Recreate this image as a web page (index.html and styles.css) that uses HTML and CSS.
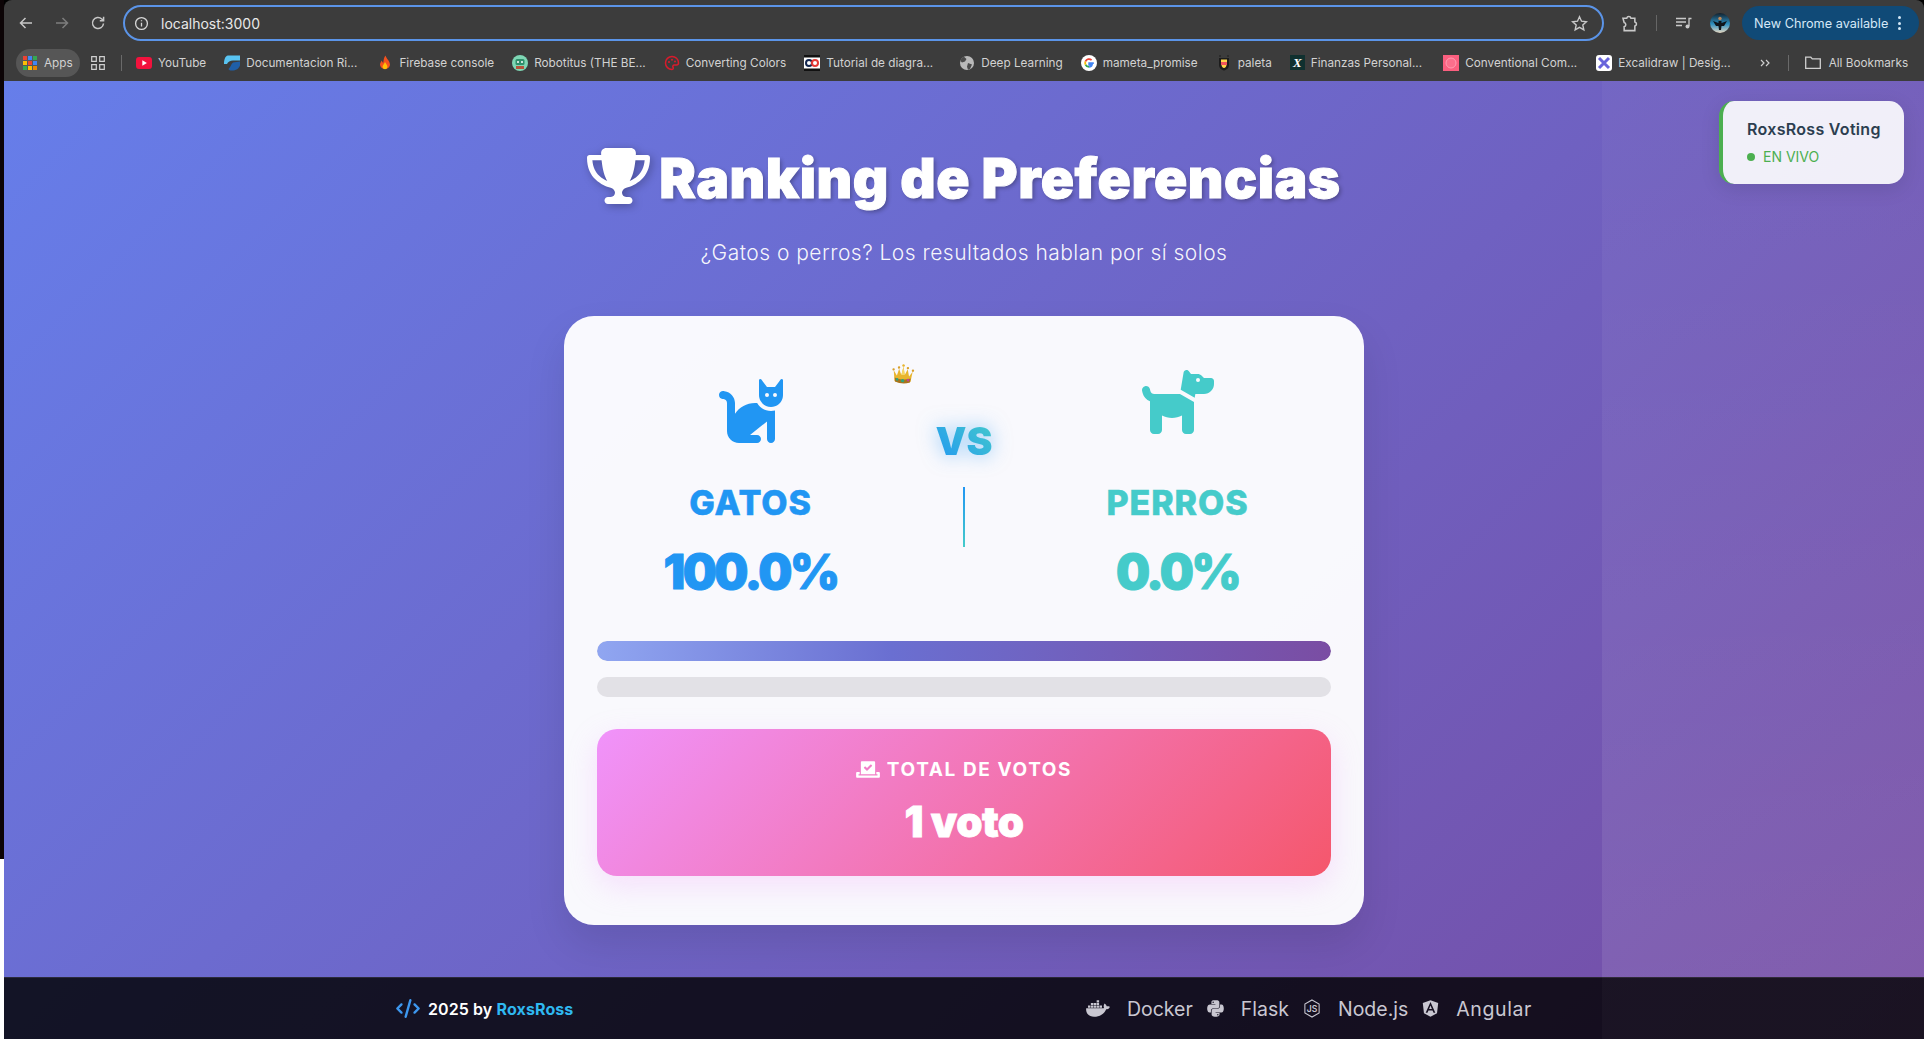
FILE: index.html
```html
<!DOCTYPE html>
<html lang="es">
<head>
<meta charset="utf-8">
<title>Ranking de Preferencias</title>
<link rel="stylesheet" href="styles.css">
</head>
<body>
<div class="shell">
  <div class="strip"></div>
  <div class="window">
    <header class="chrome">
      <div class="toolbar">
        <svg class="nav nav-back" viewBox="0 0 16 16"><path d="M14 8H2.500M7.500 3 2.500 8l5 5"/></svg>
        <svg class="nav nav-fwd" viewBox="0 0 16 16"><path d="M2 8h11.500M8.500 3l5 5-5 5"/></svg>
        <svg class="nav nav-reload" viewBox="0 0 16 16"><path d="M13.500 8.500A5.500 5.500 0 1 1 11.800 4l1.700 1.600M13.600 1.800v3.900H9.800"/></svg>
        <div class="omnibox">
          <svg class="info" viewBox="0 0 16 16"><circle cx="8" cy="8" r="6.300"/><path d="M8 7.200v4M8 4.400v1.300"/></svg>
          <span class="url">localhost:3000</span>
          <svg class="star" viewBox="0 0 16 16"><path d="m8 1.600 1.900 4.200 4.600.5-3.400 3.100 1 4.500L8 11.600l-4.100 2.300 1-4.500L1.500 6.300l4.600-.5z"/></svg>
        </div>
        <svg class="puzzle" viewBox="0 0 16 16"><path d="M2.500 3.500h3.200a1.800 1.800 0 0 1 3.500 0h3.300v3.200a1.800 1.800 0 0 1 0 3.500v3.800H3.500v-3.300a1.800 1.800 0 0 0 0-3.500z"/></svg>
        <span class="tool-sep"></span>
        <svg class="media" viewBox="0 0 16 12"><path d="M0 1.500h10M0 5h10M0 8.500h6M13 9V1.500h2.500"/><circle cx="11.500" cy="9.500" r="2" class="solid"/></svg>
        <svg class="avatar" viewBox="0 0 20 20"><defs><linearGradient id="sky" x1="0" y1="0" x2="0" y2="1"><stop offset="0" stop-color="#12202c"/><stop offset=".55" stop-color="#2d8fc0"/><stop offset="1" stop-color="#e9d9c2"/></linearGradient></defs><circle cx="10" cy="10" r="10" fill="url(#sky)"/><path d="M3 8l5.500 2v-2h3v2L17 8l-3 5h-2.500l-.5 4H9l-.5-4H6z" fill="#10151b"/><circle cx="10" cy="5.500" r="1.700" fill="#c28a5a"/></svg>
        <div class="update"><span>New Chrome available</span><span class="dots"><i></i><i></i><i></i></span></div>
      </div>
      <nav class="bookmarks">
        <div class="apps">
          <svg class="fav-14" viewBox="0 0 14 14"><path fill="#ea4335" d="M0 0h4v4H0z"/><path fill="#4285f4" d="M5 0h4v4H5z"/><path fill="#34a853" d="M10 0h4v4h-4z"/><path fill="#fbbc04" d="M0 5h4v4H0z"/><path fill="#ea4335" d="M5 5h4v4H5z"/><path fill="#4285f4" d="M10 5h4v4h-4z"/><path fill="#34a853" d="M0 10h4v4H0z"/><path fill="#fbbc04" d="M5 10h4v4H5z"/><path fill="#ea8600" d="M10 10h4v4h-4z"/></svg>
          <span>Apps</span>
        </div>
        <svg class="groups" viewBox="0 0 14 14"><path d="M.7.700h4.600v4.600H.7zM8.700.700h4.600v4.600H8.700zM.7 8.700h4.600v4.600H.7zM8.700 8.700h4.600v4.600H8.700z"/></svg>
        <span class="bm-sep"></span>
        <a class="bm"><svg class="fav" viewBox="0 0 16 16"><rect y="2" width="16" height="12" rx="3" fill="#f2123d"/><path d="m6.300 5.300 4.600 2.700-4.600 2.700z" fill="#fff"/></svg><span>YouTube</span></a>
        <a class="bm"><svg class="fav" viewBox="0 0 16 16"><path d="M4 .5h12v5H9C6 5.500 4 7 3 9H0c0-4 1-8 4-8.500z" fill="#59c4f2"/><path d="M16 6.500v4c-1 3-4 5-8 5-2 0-3-.5-3.500-1.500C7 12 7 9 9 7.500z" fill="#1f5fa8"/></svg><span>Documentacion Ri...</span></a>
        <a class="bm bm-firebase"><svg class="fav" viewBox="0 0 16 16"><path d="M8.500.500c.5 3 4.500 5 4.500 9.500a5.200 5.500 0 0 1-10 0c0-2 1-3.500 2-4.500 0 1 .5 2 1.300 2.300C6.500 5 7 2.500 8.500.500z" fill="#f4511e"/><path d="M8 7c.5 1.500 2.500 2.500 2.500 5a2.600 3 0 0 1-5 0C5.500 10 7.500 9 8 7z" fill="#ffc107"/></svg><span>Firebase console</span></a>
        <a class="bm"><svg class="fav" viewBox="0 0 16 16"><circle cx="8" cy="8" r="8" fill="#7ed6b4"/><rect x="3.500" y="4" width="9" height="6" rx="1.500" fill="#2f8f6b"/><circle cx="6" cy="7" r="1" fill="#fff"/><circle cx="10" cy="7" r="1" fill="#fff"/><path d="M4 11h8v3H4z" fill="#b5533c"/></svg><span>Robotitus (THE BE...</span></a>
        <a class="bm"><svg class="fav" viewBox="0 0 16 16"><path d="M8 1.500a6.500 6.500 0 1 0 0 13c1.500 0 1.500-1.500 1-2.200-.6-1 0-2.300 1.300-2.300h2.200c1.200 0 2-1 2-2.300C14.500 4 11.500 1.500 8 1.500z" fill="none" stroke="#d81b2c" stroke-width="1.500"/><circle cx="5" cy="7" r="1" fill="#d81b2c"/><circle cx="8" cy="4.800" r="1" fill="#d81b2c"/><circle cx="11" cy="6.500" r="1" fill="#d81b2c"/></svg><span>Converting Colors</span></a>
        <a class="bm"><svg class="fav" viewBox="0 0 16 16"><rect width="16" height="16" fill="#fff"/><rect width="16" height="2.500" fill="#111"/><rect y="13.500" width="16" height="2.500" fill="#111"/><circle cx="5" cy="8" r="3" fill="none" stroke="#12264f" stroke-width="2"/><circle cx="11" cy="8" r="3" fill="none" stroke="#e53935" stroke-width="2"/></svg><span>Tutorial de diagra...</span></a>
        <a class="bm bm-deep"><svg class="fav" viewBox="0 0 16 16"><circle cx="8" cy="8" r="7" fill="#b9b9b9"/><path d="M5 1.800 7.500 4 6 6.500 3 7.500 1.500 6C2 4 3 2.800 5 1.800zM9 8l4 1.500L11 14l-2 .8-1-3z" fill="#4a4a4a"/></svg><span>Deep Learning</span></a>
        <a class="bm"><svg class="fav" viewBox="0 0 16 16"><circle cx="8" cy="8" r="8" fill="#fff"/><path d="M12.800 8.200H8.200v1.700h2.700c-.3 1.200-1.400 2-2.800 2" fill="none" stroke="#4285f4" stroke-width="1.800"/><path d="M8.100 11.900a3.900 3.900 0 0 1-3.600-2.300" fill="none" stroke="#34a853" stroke-width="1.800"/><path d="M4.500 9.600a3.900 3.900 0 0 1 0-3.200" fill="none" stroke="#fbbc04" stroke-width="1.800"/><path d="M4.500 6.400a3.900 3.900 0 0 1 6.100-1.300" fill="none" stroke="#ea4335" stroke-width="1.800"/></svg><span>mameta_promise</span></a>
        <a class="bm"><svg class="fav" viewBox="0 0 16 16"><path d="M3 3h10v7c0 3-2.500 5-5 5.500C5.500 15 3 13 3 10z" fill="#1c1c1c"/><path d="M5 4.500h6V7H5z" fill="#ffd54a"/><path d="M5 7h6v3H5z" fill="#f2545b"/><path d="M5.500 10h5c0 1.500-1.200 2.800-2.500 3-1.300-.2-2.500-1.500-2.500-3z" fill="#ffd54a"/><path d="M4 0v2M12 0v2" stroke="#1c1c1c"/></svg><span>paleta</span></a>
        <a class="bm"><span class="fav-x">X</span><span>Finanzas Personal...</span></a>
        <a class="bm bm-conv"><svg class="fav" viewBox="0 0 16 16"><rect width="16" height="16" fill="#fb5f7f"/><circle cx="8" cy="8" r="5" fill="#fb6f8c" stroke="#ff9db2"/></svg><span>Conventional Com...</span></a>
        <a class="bm bm-excal"><svg class="fav" viewBox="0 0 16 16"><rect width="16" height="16" rx="3" fill="#fff"/><path d="M3 3l10 10M13 3 3 13" stroke="#6965db" stroke-width="3"/></svg><span>Excalidraw | Desig...</span></a>
        <svg class="chev" viewBox="0 0 10 8"><path d="m1 1 3 3-3 3M6 1l3 3-3 3"/></svg>
        <span class="bm-sep bm-sep-end"></span>
        <a class="bm bm-all"><svg class="folder" viewBox="0 0 16 13"><path d="M.7 1.200h5.100l1.500 1.700h8v9.400H.7z"/></svg><span>All Bookmarks</span></a>
      </nav>
    </header>

    <div class="page">
      <aside class="live-card">
        <div class="live-title">RoxsRoss Voting</div>
        <div class="live-status"><i></i><span>EN VIVO</span></div>
      </aside>

      <main class="content">
        <h1 class="title">
          <svg class="trophy" viewBox="0 0 576 512"><path d="M400 0H176c-26.500 0-48.100 21.800-47.100 48.200c.2 5.300 .4 10.600 .7 15.800H24C10.700 64 0 74.700 0 88c0 92.600 33.500 157 78.500 200.700c44.300 43.100 98.300 64.800 138.100 75.800c23.400 6.500 39.400 26 39.400 45.600c0 20.900-17 37.900-37.900 37.900H192c-17.700 0-32 14.300-32 32s14.300 32 32 32H384c17.700 0 32-14.300 32-32s-14.300-32-32-32H357.900C337 448 320 431 320 410.100c0-19.600 15.900-39.200 39.400-45.600c39.900-11 93.900-32.700 138.200-75.800C542.500 245 576 180.600 576 88c0-13.300-10.700-24-24-24H446.400c.3-5.200 .5-10.400 .7-15.800C448.100 21.800 426.500 0 400 0zM48.900 112h84.400c9.100 90.100 29.200 150.300 51.900 190.600c-24.900-11-50.800-26.500-73.200-48.300c-32-31.100-58-76-63-142.300zM464.100 254.300c-22.400 21.800-48.300 37.300-73.200 48.300c22.700-40.300 42.800-100.500 51.900-190.600h84.400c-5.100 66.300-31.100 111.200-63 142.300z"/></svg>
          <span>Ranking de Preferencias</span>
        </h1>
        <p class="subtitle">¿Gatos o perros? Los resultados hablan por sí solos</p>

        <section class="card">
          <svg class="crown" viewBox="0 0 24 20"><g transform="rotate(4 12 10)"><path d="M2.500 7 6 12l1.800-7 2.600 6L12 2.500 13.800 11l2.600-6 1.800 7L21.500 7 20 17.500c-5 2-11 2-16 0z" fill="#e8b52f"/><path d="M4 14c5 2 11 2 16 0l-.5 4c-5 1.800-10 1.800-15 0z" fill="#a8741c"/><path d="M12 2.500 13.800 11h-3.400z" fill="#f6d765"/><circle cx="2.300" cy="6" r="1.200" fill="#d9a02a"/><circle cx="7.600" cy="3.800" r="1.200" fill="#d9a02a"/><circle cx="12" cy="1.500" r="1.300" fill="#e8b52f"/><circle cx="16.500" cy="3.800" r="1.200" fill="#d9a02a"/><circle cx="21.700" cy="6" r="1.200" fill="#d9a02a"/><circle cx="6.500" cy="15.800" r="1.300" fill="#2fa37c"/><circle cx="12" cy="16.600" r="1.700" fill="#2fa37c"/><circle cx="17.500" cy="15.800" r="1.300" fill="#c2409a"/></g></svg>
          <div class="versus">
            <div class="side side-cat">
              <svg class="animal" viewBox="0 0 576 512"><path d="M320 192h17.100c22.100 38.300 63.500 64 110.900 64c11 0 21.800-1.400 32-4v4 32V480c0 17.700-14.300 32-32 32s-32-14.300-32-32V339.200L280 448h56c17.700 0 32 14.300 32 32s-14.300 32-32 32H192c-53 0-96-43-96-96V192.500c0-16.100-12-29.800-28-31.800l-7.900-1c-17.500-2.200-30-18.200-27.800-35.700s18.200-30 35.700-27.800l7.900 1c48 6 84.100 46.800 84.100 95.300v85.300c34.400-51.700 93.200-85.800 160-85.800zm160 26.500v0c-10 3.500-20.800 5.500-32 5.500c-28.400 0-54-12.400-71.600-32h0c-3.700-4.100-7-8.500-9.900-13.200C357.300 164 352 146.600 352 128v0V32 12 10.700C352 4.800 356.700 .1 362.600 0h.2c3.300 0 6.400 1.600 8.400 4.200l0 .1L384 21.300l27.200 36.300L416 64h64l4.800-6.400L512 21.300 524.800 4.300l0-.1c2-2.600 5.100-4.200 8.400-4.200h.2C539.300 .1 544 4.800 544 10.700V12 32v96c0 17.300-4.600 33.600-12.600 47.600c-11.300 19.800-29.600 35.200-51.400 42.900zM432 128a16 16 0 1 0 -32 0 16 16 0 1 0 32 0zm48 16a16 16 0 1 0 0-32 16 16 0 1 0 0 32z"/></svg>
              <div class="side-name">GATOS</div>
              <div class="side-pct">100.0%</div>
            </div>
            <div class="middle">
              <div class="vs">VS</div>
              <div class="divider"></div>
            </div>
            <div class="side side-dog">
              <svg class="animal" viewBox="0 0 576 512"><path d="M309.600 158.500L332.700 19.800C334.600 8.400 344.500 0 356.100 0c7.500 0 14.500 3.500 19 9.500L392 32h52.100c12.700 0 24.900 5.100 33.900 14.100L496 64h56c13.300 0 24 10.700 24 24v24c0 44.200-35.800 80-80 80H464 448 426.700l-5.100 30.500-112-64zM416 256.100L416 480c0 17.700-14.300 32-32 32H352c-17.700 0-32-14.300-32-32V364.800c-24 12.300-51.200 19.200-80 19.200s-56-6.900-80-19.200V480c0 17.700-14.300 32-32 32H96c-17.700 0-32-14.300-32-32V249.800c-28.800-10.900-51.400-35.300-59.200-66.500L1 167.800c-4.300-17.100 6.100-34.500 23.300-38.800s34.500 6.100 38.800 23.300l3.900 15.500C70.500 182 83.300 192 98 192h30 16H303.800L416 256.100zM464 80a16 16 0 1 0 -32 0 16 16 0 1 0 32 0z"/></svg>
              <div class="side-name">PERROS</div>
              <div class="side-pct">0.0%</div>
            </div>
          </div>

          <div class="bars">
            <div class="bar"><div class="bar-fill" style="width:100%"></div></div>
            <div class="bar"></div>
          </div>

          <div class="total">
            <div class="total-label">
              <svg class="vote" viewBox="0 0 640 512"><path d="M608 320h-64v64h22.400c5.300 0 9.600 3.600 9.600 8v16c0 4.400-4.300 8-9.600 8H73.600c-5.300 0-9.600-3.600-9.600-8v-16c0-4.400 4.300-8 9.600-8H96v-64H32c-17.700 0-32 14.300-32 32v96c0 17.700 14.300 32 32 32h576c17.700 0 32-14.300 32-32v-96c0-17.700-14.300-32-32-32zm-96 64V64.300c0-17.900-14.500-32.300-32.300-32.300H160.400C142.500 32 128 46.500 128 64.300V384h384zM211.200 202l25.500-25.300c4.200-4.200 11-4.200 15.200.1l41.300 41.600 95.200-94.400c4.200-4.200 11-4.200 15.200.1l25.300 25.500c4.200 4.200 4.200 11-.1 15.200L300.500 292c-4.200 4.200-11 4.200-15.200-.1l-74.100-74.700c-4.200-4.200-4.200-11 0-15.200z"/></svg>
              <span>TOTAL DE VOTOS</span>
            </div>
            <div class="total-value">1 voto</div>
          </div>
        </section>
      </main>

      <footer class="footer">
        <div class="footer-inner">
          <div class="credit">
            <svg class="code" viewBox="0 0 640 512"><path d="M392.800 1.200c-17-4.900-34.700 5-39.600 22l-128 448c-4.900 17 5 34.700 22 39.600s34.700-5 39.600-22l128-448c4.900-17-5-34.700-22-39.600zm80.600 120.100c-12.500 12.500-12.500 32.800 0 45.300L562.700 256l-89.400 89.400c-12.500 12.500-12.500 32.800 0 45.300s32.800 12.500 45.300 0l112-112c12.500-12.500 12.500-32.800 0-45.300l-112-112c-12.500-12.500-32.800-12.500-45.300 0zm-306.700 0c-12.500-12.500-32.800-12.500-45.300 0l-112 112c-12.500 12.500-12.500 32.800 0 45.300l112 112c12.500 12.500 32.800 12.500 45.300 0s12.500-32.800 0-45.300L77.300 256l89.400-89.400c12.500-12.500 12.500-32.800 0-45.300z"/></svg>
            <span>2025 by <b class="brand">RoxsRoss</b></span>
          </div>
          <div class="stack">
            <span class="tech"><svg class="docker" viewBox="0 0 640 512"><path d="M349.900 236.300h-66.100v-59.400h66.100v59.400zm0-204.300h-66.100v60.700h66.100V32zm78.200 144.800H362v59.400h66.100v-59.400zm-156.300-72.100h-66.100v60.100h66.100v-60.100zm78.100 0h-66.100v60.100h66.100v-60.100zm276.800 100c-14.400-9.700-47.600-13.200-73.100-8.400-3.300-24-16.700-44.900-41.100-63.700l-14-9.300-9.300 14c-18.400 27.800-23.400 73.600-3.700 103.800-8.700 4.700-25.800 11.100-48.400 10.700H2.400c-8.700 50.800 5.800 116.800 44 162.100 37.100 43.900 92.700 66.200 165.400 66.200 157.400 0 273.900-72.500 328.400-204.200 21.400.4 67.600.1 91.300-45.200 1.500-2.500 6.600-13.200 8.500-17.100l-13.300-8.900zm-511.100-27.900h-66v59.400h66.100v-59.400zm78.100 0h-66.100v59.400h66.100v-59.400zm78.100 0h-66.100v59.400h66.100v-59.400zm-78.100-72.100h-66.100v60.100h66.100v-60.100z"/></svg>Docker</span>
            <span class="tech"><svg class="python" viewBox="0 0 448 512"><path d="M439.800 200.500c-7.700-30.900-22.300-54.200-53.400-54.200h-40.100v47.400c0 36.800-31.200 67.800-66.800 67.800H172.700c-29.200 0-53.400 25-53.400 54.300v101.800c0 29 25.200 46 53.400 54.300 33.800 9.900 66.300 11.700 106.800 0 26.900-7.800 53.400-23.500 53.400-54.300v-40.700H226.200v-13.600h160.200c31.100 0 42.600-21.700 53.400-54.200 11.200-33.500 10.700-65.700 0-108.600zM286.200 404c11.100 0 20.100 9.100 20.100 20.300 0 11.300-9 20.400-20.100 20.400-11 0-20.100-9.200-20.100-20.400.1-11.300 9.100-20.300 20.100-20.300zM167.800 248.100h106.800c29.700 0 53.400-24.500 53.400-54.300V91.900c0-29-24.400-50.700-53.400-55.600-35.800-5.900-74.700-5.600-106.800.1-45.200 8-53.400 24.700-53.400 55.600v40.700h106.900v13.600h-147c-31.100 0-58.300 18.700-66.800 54.200-9.800 40.700-10.200 66.100 0 108.600 7.600 31.600 25.700 54.200 56.800 54.200H101v-48.800c0-35.300 30.500-66.400 66.800-66.400zm-6.700-142.600c-11.100 0-20.100-9.100-20.100-20.300.1-11.300 9-20.400 20.100-20.400 11 0 20.100 9.200 20.100 20.400s-9 20.300-20.100 20.300z"/></svg>Flask</span>
            <span class="tech"><svg class="node" viewBox="0 0 18 20"><path d="M9 1l7.500 4.300v9.400L9 19l-7.500-4.300V5.300z"/><text x="9" y="13.200" text-anchor="middle" class="node-js">JS</text></svg>Node.js</span>
            <span class="tech tech-wide"><svg class="angular" viewBox="0 0 448 512"><path d="M185.700 268.100h76.200l-38.100-91.600-38.100 91.600zM223.800 32L16 106.400l31.800 275.700 176 97.900 176-97.900 31.800-275.700zM354 373.800h-48.600l-26.200-65.400H168.600l-26.200 65.400H93.700L223.800 81.500z"/></svg>Angular</span>
          </div>
        </div>
      </footer>
    </div>
  </div>
</div>
</body>
</html>
```
FILE: styles.css
```css
* { box-sizing: border-box; }
html, body { margin: 0; height: 100%; overflow: hidden; }
body { font-family: Inter, "Liberation Sans", sans-serif; background: #000; }

.shell { display: flex; height: 1039px; }
.strip { width: 4px; flex: none; background: linear-gradient(#0c0406 859px, #fff 859px); }
.window { flex: 1; min-width: 0; display: flex; flex-direction: column; }

/* browser chrome */
.chrome { height: 81px; flex: none; background: #3c3c3c; color: #d6d6d6; border-radius: 8px 8px 0 0; }
.toolbar { height: 46px; display: flex; align-items: center; }
.nav { width: 16px; height: 16px; fill: none; stroke: #c7c7c7; stroke-width: 1.5; flex: none; }
.nav-back { margin-left: 14px; }
.nav-fwd { margin-left: 20px; stroke: #7d7d7d; }
.nav-reload { margin-left: 20px; }
.omnibox { margin-left: 17px; width: 1481px; height: 36px; flex: none; border: 2px solid #5b94e8; border-radius: 18px; display: flex; align-items: center; padding: 0 9px; }
.info { width: 15px; height: 15px; fill: none; stroke: #d8d8d8; stroke-width: 1.4; flex: none; }
.url { margin-left: 12px; font-size: 14px; color: #e8e8e8; flex: 1; }
.star { width: 17px; height: 17px; fill: none; stroke: #c9c9c9; stroke-width: 1.3; margin-right: 5px; }
.puzzle { margin-left: 16px; width: 19px; height: 19px; fill: none; stroke: #c9c9c9; stroke-width: 1.3; flex: none; }
.tool-sep { margin-left: 17px; width: 1px; height: 16px; background: #666; flex: none; }
.media { margin-left: 19px; width: 16px; height: 12px; fill: none; stroke: #c9c9c9; stroke-width: 1.3; flex: none; }
.media .solid { fill: #c9c9c9; stroke: none; }
.avatar { margin-left: 18px; width: 20px; height: 20px; flex: none; }
.update { margin-left: 12px; width: 177px; height: 34px; flex: none; background: #104a77; border-radius: 17px; display: flex; align-items: center; padding-left: 12px; font-size: 12.700px; color: #d5e8f7; white-space: nowrap; }
.dots { margin-left: 10px; display: flex; flex-direction: column; gap: 2.500px; }
.dots i { width: 3px; height: 3px; border-radius: 50%; background: #d5e8f7; }

.bookmarks { height: 35px; display: flex; align-items: center; font-size: 11.750px; color: #d2d2d2; white-space: nowrap; padding-left: 12px; padding-bottom: 2px; }
.apps { width: 64px; height: 28px; flex: none; border-radius: 14px; background: #565656; display: flex; align-items: center; padding-left: 7px; gap: 7px; }
.fav-14 { width: 14px; height: 14px; }
.groups { margin-left: 11px; width: 14px; height: 14px; flex: none; fill: none; stroke: #cfcfcf; stroke-width: 1.2; }
.bm-sep { margin-left: 16px; width: 1px; height: 16px; background: #6a6a6a; flex: none; }
.bm-sep-end { margin-left: 18px; }
.bm { display: flex; align-items: center; gap: 6px; margin-left: 18px; flex: none; }
.bm-sep + .bm { margin-left: 14px; }
.bm-firebase { margin-left: 20px; }
.bm-deep { margin-left: 26px; }
.bm-conv { margin-left: 21px; }
.bm-excal { margin-left: 19px; }
.bm-sep + .bm-all { margin-left: 16px; gap: 8px; }
.fav { width: 16px; height: 16px; flex: none; }
.fav-x { width: 15px; height: 15px; background: #10302f; color: #fff; font: italic 700 13px/15px "Liberation Serif", serif; text-align: center; }
.chev { margin-left: 29px; width: 10px; height: 8px; fill: none; stroke: #cfcfcf; stroke-width: 1.2; flex: none; }
.folder { width: 16px; height: 13px; fill: none; stroke: #cfcfcf; stroke-width: 1.3; flex: none; }

/* page */
.page { flex: 1; min-height: 0; position: relative; display: flex; flex-direction: column; background: linear-gradient(135deg, #667eea 0%, #764ba2 100%); }
.page::after { content: ""; position: absolute; top: 0; bottom: 0; right: 0; width: 322px; background: linear-gradient(rgba(255, 255, 255, .03) 0%, rgba(255, 255, 255, .09) 93.500%, rgba(255, 255, 255, .025) 93.500%); pointer-events: none; }

.live-card { position: absolute; z-index: 2; top: 20px; right: 20px; width: 185px; height: 83px; background: rgba(255, 255, 255, .9); border-left: 4px solid #4caf50; border-radius: 15px; padding: 17px 0 0 24px; box-shadow: 0 5px 20px rgba(0, 0, 0, .1); }
.live-title { font-size: 16px; font-weight: 600; line-height: 22px; letter-spacing: .3px; color: #2c3e50; white-space: nowrap; }
.live-status { margin-top: 6px; display: flex; align-items: center; gap: 8px; font-size: 14px; line-height: 22px; color: #4caf50; }
.live-status i { width: 8px; height: 8px; border-radius: 50%; background: #4caf50; }

.content { flex: 1; min-height: 0; display: flex; flex-direction: column; align-items: center; padding-top: 55px; }
.title { margin: 0; height: 84px; display: flex; align-items: center; gap: 9px; font-size: 55px; font-weight: 900; letter-spacing: .5px; -webkit-text-stroke: 1px #fff; color: #fff; text-shadow: 2px 2px 4px rgba(0, 0, 0, .3); white-space: nowrap; }
.trophy { width: 63px; height: 56px; fill: #fff; margin-top: -4px; filter: drop-shadow(2px 2px 4px rgba(0, 0, 0, .3)); }
.subtitle { margin: 17px 0 0; font-size: 21px; font-weight: 300; line-height: 31px; letter-spacing: .48px; color: rgba(255, 255, 255, .95); }

.card { margin-top: 48px; width: 800px; height: 609px; flex: none; position: relative; padding: 33px 33px 0; background: rgba(255, 255, 255, .96); border-radius: 30px; box-shadow: 0 20px 40px rgba(0, 0, 0, .1); }
.crown { position: absolute; left: 327px; top: 48px; width: 24px; height: 20px; }
.versus { display: grid; grid-template-columns: 1fr 120px 1fr; height: 292px; }
.side { display: flex; flex-direction: column; align-items: center; }
.side-cat { padding-top: 30px; color: #2196f3; }
.side-dog { padding-top: 21px; color: #45cbca; }
.animal { width: 72px; height: 64px; fill: currentColor; flex: none; }
.side-cat .animal { margin-bottom: 40px; }
.side-dog .animal { margin-bottom: 49px; }
.side-name { font-size: 34px; font-weight: 800; line-height: 40px; letter-spacing: .9px; -webkit-text-stroke: .5px currentColor; }
.side-pct { margin-top: 18px; font-size: 48px; font-weight: 900; line-height: 62px; letter-spacing: -2.500px; -webkit-text-stroke: 1px currentColor; }
.middle { display: flex; flex-direction: column; align-items: center; padding-top: 68px; }
.vs { font-size: 39px; font-weight: 900; line-height: 48px; color: transparent; background: linear-gradient(45deg, #2196f3, #45cbca); -webkit-background-clip: text; background-clip: text; filter: drop-shadow(0 0 10px rgba(33, 150, 243, .5)); }
.divider { margin-top: 22px; width: 2px; height: 60px; background: linear-gradient(#2196f3, #45cbca); }

.bars { display: flex; flex-direction: column; gap: 16px; }
.bar { height: 20px; border-radius: 10px; background: #e2e1e6; overflow: hidden; }
.bar-fill { height: 100%; border-radius: 10px; background: linear-gradient(90deg, #90a6f1 0%, #6a6fd1 40%, #7a4da3 100%); }

.total { margin-top: 32px; height: 147px; padding-top: 25px; border-radius: 20px; color: #fff; background: linear-gradient(135deg, #f093fb 0%, #f5576c 100%); box-shadow: 0 10px 30px rgba(240, 147, 251, .25); display: flex; flex-direction: column; align-items: center; }
.total-label { height: 30px; display: flex; align-items: center; gap: 7px; font-size: 19px; font-weight: 700; letter-spacing: 1.600px; white-space: nowrap; }
.vote { width: 24px; height: 19px; fill: #fff; }
.total-value { margin-top: 8px; font-size: 42px; font-weight: 900; line-height: 60px; letter-spacing: -.5px; -webkit-text-stroke: .8px #fff; }

.footer { height: 62px; flex: none; background: rgba(0, 0, 0, .82); border-top: 1px solid rgba(255, 255, 255, .1); display: flex; justify-content: center; }
.footer-inner { width: 1200px; padding: 0 32px; display: flex; align-items: center; justify-content: space-between; }
.credit { display: flex; align-items: center; gap: 8px; font-size: 16px; font-weight: 600; letter-spacing: .1px; color: #fff; }
.code { width: 24px; height: 19px; fill: #3d97ee; }
.brand { font-weight: 700; color: #2fb8f0; }
.stack { display: flex; align-items: center; gap: 14px; font-size: 19.500px; color: #c9c7d1; }
.tech { display: flex; align-items: center; gap: 17px; }
.tech-wide { letter-spacing: .6px; }
.tech svg { fill: #c9c7d1; height: 19px; flex: none; }
.docker { width: 24px; }
.python { width: 17px; }
.node { width: 18px; }
.node path { fill: none; stroke: #c9c7d1; stroke-width: 1.1; }
.tech .node-js { font-size: 9px; font-weight: 600; letter-spacing: 0; fill: #c9c7d1; }
.angular { width: 17px; }
```
